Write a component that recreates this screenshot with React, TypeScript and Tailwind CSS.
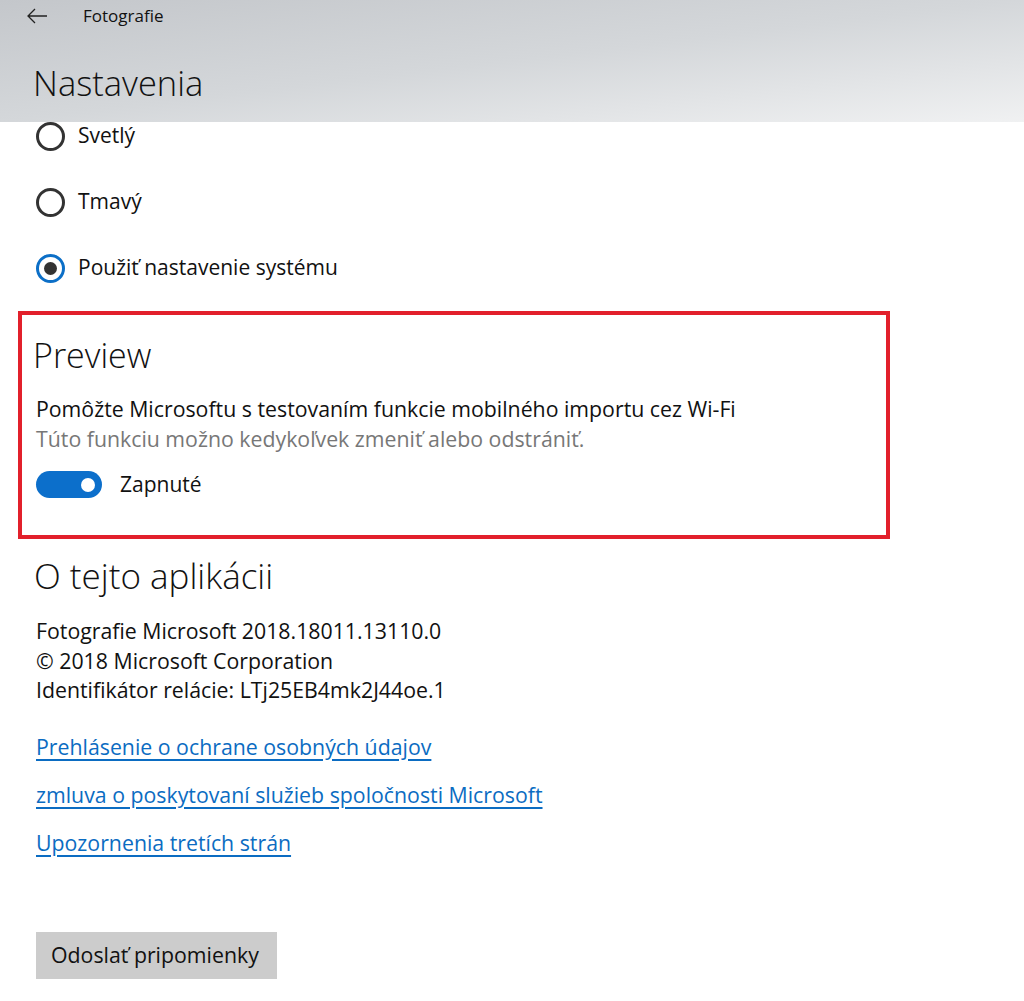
import React from 'react';

const FONT = { fontFamily: '"Open Sans", "Noto Sans", sans-serif' };

function Radio({ label, checked }: { label: string; checked?: boolean }) {
  return (
    <div className="flex items-center h-[66px] gap-[13px]">
      <span
        className={`w-[29px] h-[29px] rounded-full border-[3px] flex items-center justify-center ${
          checked ? 'border-[#0c6fc7]' : 'border-[#333333]'
        }`}
      >
        {checked && <span className="w-[13px] h-[13px] rounded-full bg-[#333333]" />}
      </span>
      <span className="text-[21px] text-[#111]">{label}</span>
    </div>
  );
}

const LINKS = [
  'Prehlásenie o ochrane osobných údajov',
  'zmluva o poskytovaní služieb spoločnosti Microsoft',
  'Upozornenia tretích strán',
];

export default function App() {
  return (
    <div className="w-[1024px] h-[1001px] bg-white overflow-hidden flex flex-col" style={FONT}>
      {/* title bar */}
      <div className="h-[122px] shrink-0 bg-linear-to-br from-[#c4c7cb] via-[#d4d7da] to-[#f0f1f2] flex flex-col">
        <div className="flex items-center h-[32px] pl-[26px]">
          <svg width="22" height="16" viewBox="0 0 22 16" fill="none" stroke="#222" strokeWidth="1.3">
            <path d="M21 8H2M9 1L2 8l7 7" />
          </svg>
          <span className="ml-[35px] text-[17px] text-[#111]">Fotografie</span>
        </div>
        <div className="pl-[33px] mt-[34px] text-[34.5px] leading-none text-[#111] font-light">Nastavenia</div>
      </div>

      <div className="flex-1 px-[36px] -mt-[19px]">
        <Radio label="Svetlý" />
        <Radio label="Tmavý" />
        <Radio label="Použiť nastavenie systému" checked />

        <div className="-ml-[18px] mt-[10px] w-[872px] h-[228px] border-[4px] border-[#e2202b] pl-[12px] pt-[20px]">
          <div className="text-[34px] leading-[40px] font-light text-[#111] -ml-[1px]">Preview</div>
          <div className="mt-[19px] text-[21.3px] leading-[30px] text-[#111] pl-[2px]">
            Pomôžte Microsoftu s testovaním funkcie mobilného importu cez Wi-Fi
          </div>
          <div className="text-[21.3px] leading-[30px] text-[#777] pl-[2px]">
            Túto funkciu možno kedykoľvek zmeniť alebo odstrániť.
          </div>
          <div className="flex items-center mt-[15px] pl-[2px] gap-[18px]">
            <span className="w-[66px] h-[27px] rounded-full bg-[#0c6fcb] flex items-center justify-end pr-[7px]">
              <span className="w-[14px] h-[14px] rounded-full bg-white" />
            </span>
            <span className="text-[21px] text-[#111]">Zapnuté</span>
          </div>
        </div>

        <div className="mt-[15px] -ml-[2px] text-[35px] leading-[44px] font-light text-[#111]">O tejto aplikácii</div>
        <div className="mt-[18px] text-[21.3px] leading-[29.5px] text-[#111]">
          <div>Fotografie Microsoft 2018.18011.13110.0</div>
          <div>© 2018 Microsoft Corporation</div>
          <div>Identifikátor relácie: LTj25EB4mk2J44oe.1</div>
        </div>

        <div className="mt-[27px] flex flex-col gap-[19px]">
          {LINKS.map(l => (
            <a key={l} className="text-[21.3px] leading-[29px] text-[#0b6cc2] underline underline-offset-[4px] w-fit">
              {l}
            </a>
          ))}
        </div>

        <button className="mt-[75px] w-[241px] h-[47px] bg-[#cccccc] text-left pl-[15px] text-[21.3px] text-[#111]">
          Odoslať pripomienky
        </button>
      </div>
    </div>
  );
}
